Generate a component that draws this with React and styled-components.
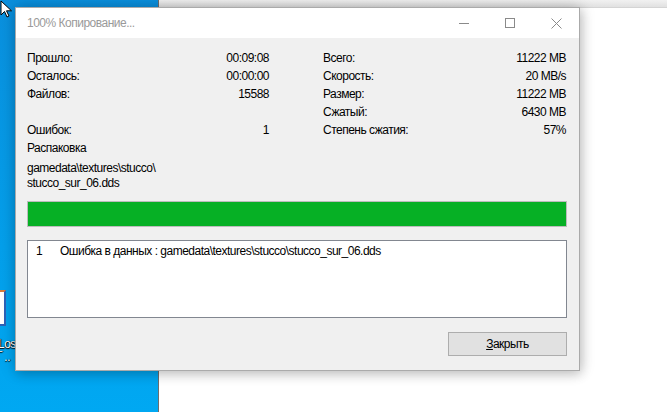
import styled, { createGlobalStyle } from "styled-components"

const Global = createGlobalStyle`
  html, body { margin:0; padding:0; }
  body {
    width:667px;
    height:412px;
    overflow:hidden;
    font-family:"Liberation Sans", Arial, sans-serif;
    font-size:12px;
    letter-spacing:-0.5px;
    color:#000;
  }
`

const Desktop = styled.div`
  position:relative;
  width:667px;
  height:412px;
  display:flex;
  overflow:hidden;
`
const DesktopArea = styled.div`
  width:158px;
  background:linear-gradient(180deg,#0a8fdd 0%,#049fea 60%,#00a8f2 100%);
  display:flex;
  flex-direction:column;
  padding-top:290px;
  box-sizing:border-box;
`
const DesktopIcon = styled.div`
  width:6px;
  height:36px;
  background:#fff;
  border:2px solid #2c62b8;
  border-left:none;
  border-top-color:#d87a3a;
  box-sizing:border-box;
`
const IconLabel = styled.div`
  margin-top:${p => p.$gap || 0}px;
  color:#fff;
  font-size:12px;
  line-height:13px;
  text-shadow:0 1px 1px #000,1px 0 1px #000;
  white-space:nowrap;
  margin-left:-2px;
`
const BackWindow = styled.div`
  flex:1;
  background:#fff;
  border-left:1px solid #6d6d6d;
  display:flex;
  flex-direction:column;
`
const BackTop = styled.div`
  height:7px;
  background:linear-gradient(180deg,#f1f1f1,#e1e1e1);
  border-bottom:1px solid #d4d4d4;
`

const Dialog = styled.div`
  position:absolute;
  left:15px;
  top:7px;
  width:565px;
  height:364px;
  box-sizing:border-box;
  border:1px solid #aaaaaa;
  background:#f0f0f0;
  box-shadow:0 0 14px rgba(0,0,0,0.22), 2px 4px 10px rgba(0,0,0,0.12);
  display:flex;
  flex-direction:column;
`
const TitleBar = styled.div`
  height:30px;
  background:#fff;
  display:flex;
  align-items:center;
`
const Title = styled.div`
  flex:1;
  padding-left:11px;
  color:#9a9a9a;
  font-size:12px;
`
const TitleButton = styled.div`
  width:46px;
  height:30px;
  display:flex;
  align-items:center;
  justify-content:center;
`
const Body = styled.div`
  flex:1;
  padding:11px 12px 14px 11px;
  display:flex;
  flex-direction:column;
`
const Stats = styled.div`
  display:grid;
  grid-template-columns:242px 243px;
  column-gap:54px;
`
const Column = styled.div`
  display:flex;
  flex-direction:column;
`
const Row = styled.div`
  height:18px;
  display:flex;
  justify-content:space-between;
  align-items:center;
  white-space:nowrap;
`
const Line = styled.div`
  height:18px;
  display:flex;
  align-items:center;
`
const Path = styled.div`
  margin-top:3.5px;
  line-height:15px;
`
const Progress = styled.div`
  margin-top:10.5px;
  height:26px;
  box-sizing:border-box;
  border:1px solid #bcbcbc;
  background:#e6e6e6;
`
const Fill = styled.div`
  height:100%;
  background:#06b025;
`
const Log = styled.div`
  margin-top:13px;
  height:78px;
  box-sizing:border-box;
  border:1px solid #828790;
  background:#fff;
  padding:2px 0 0 8px;
`
const LogItem = styled.div`
  display:flex;
  line-height:16px;
`
const LogNum = styled.span`
  width:24px;
`
const Footer = styled.div`
  margin-top:auto;
  display:flex;
  justify-content:flex-end;
`
const Button = styled.button`
  width:119px;
  height:24px;
  background:#e1e1e1;
  border:1px solid #adadad;
  font-family:inherit;
  font-size:12px;
  letter-spacing:inherit;
  color:#000;
  padding:0;
  u { text-decoration:underline; }
`

const left = [
  ["Прошло:", "00:09:08"],
  ["Осталось:", "00:00:00"],
  ["Файлов:", "15588"],
  ["", ""],
  ["Ошибок:", "1"],
]
const right = [
  ["Всего:", "11222 MB"],
  ["Скорость:", "20 MB/s"],
  ["Размер:", "11222 MB"],
  ["Сжатый:", "6430 MB"],
  ["Степень сжатия:", "57%"],
]

const Cursor = () => (
  <svg style={{ position: "absolute", left: 0, top: 0 }} width="14" height="20" viewBox="0 0 14 20">
    <path d="M1 1 L1 15 L4.5 11.5 L7 17 L9 16 L6.5 10.8 L11.5 10.8 Z" fill="#fff" stroke="#000" strokeWidth="1" strokeLinejoin="round" />
  </svg>
)

const App = () => {
  return (
    <>
      <Global />
      <Desktop>
        <DesktopArea>
          <DesktopIcon />
          <IconLabel $gap={12}>Lost</IconLabel>
          <IconLabel>‾ ..</IconLabel>
        </DesktopArea>
        <BackWindow>
          <BackTop />
        </BackWindow>
        <Dialog>
          <TitleBar>
            <Title>100% Копирование...</Title>
            <TitleButton>
              <svg width="11" height="11" viewBox="0 0 11 11"><path d="M0 5.5 H10" stroke="#8a8a8a" strokeWidth="1" /></svg>
            </TitleButton>
            <TitleButton>
              <svg width="11" height="11" viewBox="0 0 11 11"><rect x="0.5" y="0.5" width="9" height="9" fill="none" stroke="#8a8a8a" strokeWidth="1" /></svg>
            </TitleButton>
            <TitleButton>
              <svg width="11" height="11" viewBox="0 0 11 11"><path d="M0.5 0.5 L10.5 10.5 M10.5 0.5 L0.5 10.5" stroke="#8a8a8a" strokeWidth="1" /></svg>
            </TitleButton>
          </TitleBar>
          <Body>
            <Stats>
              <Column>
                {left.map(([k, v], i) => (
                  <Row key={i}><span>{k}</span><span>{v}</span></Row>
                ))}
              </Column>
              <Column>
                {right.map(([k, v], i) => (
                  <Row key={i}><span>{k}</span><span>{v}</span></Row>
                ))}
              </Column>
            </Stats>
            <Line>Распаковка</Line>
            <Path>gamedata\textures\stucco\<br />stucco_sur_06.dds</Path>
            <Progress><Fill style={{ width: "100%" }} /></Progress>
            <Log>
              <LogItem>
                <LogNum>1</LogNum>
                <span>Ошибка в данных : gamedata\textures\stucco\stucco_sur_06.dds</span>
              </LogItem>
            </Log>
            <Footer>
              <Button><u>З</u>акрыть</Button>
            </Footer>
          </Body>
        </Dialog>
        <Cursor />
      </Desktop>
    </>
  )
}

export default App
